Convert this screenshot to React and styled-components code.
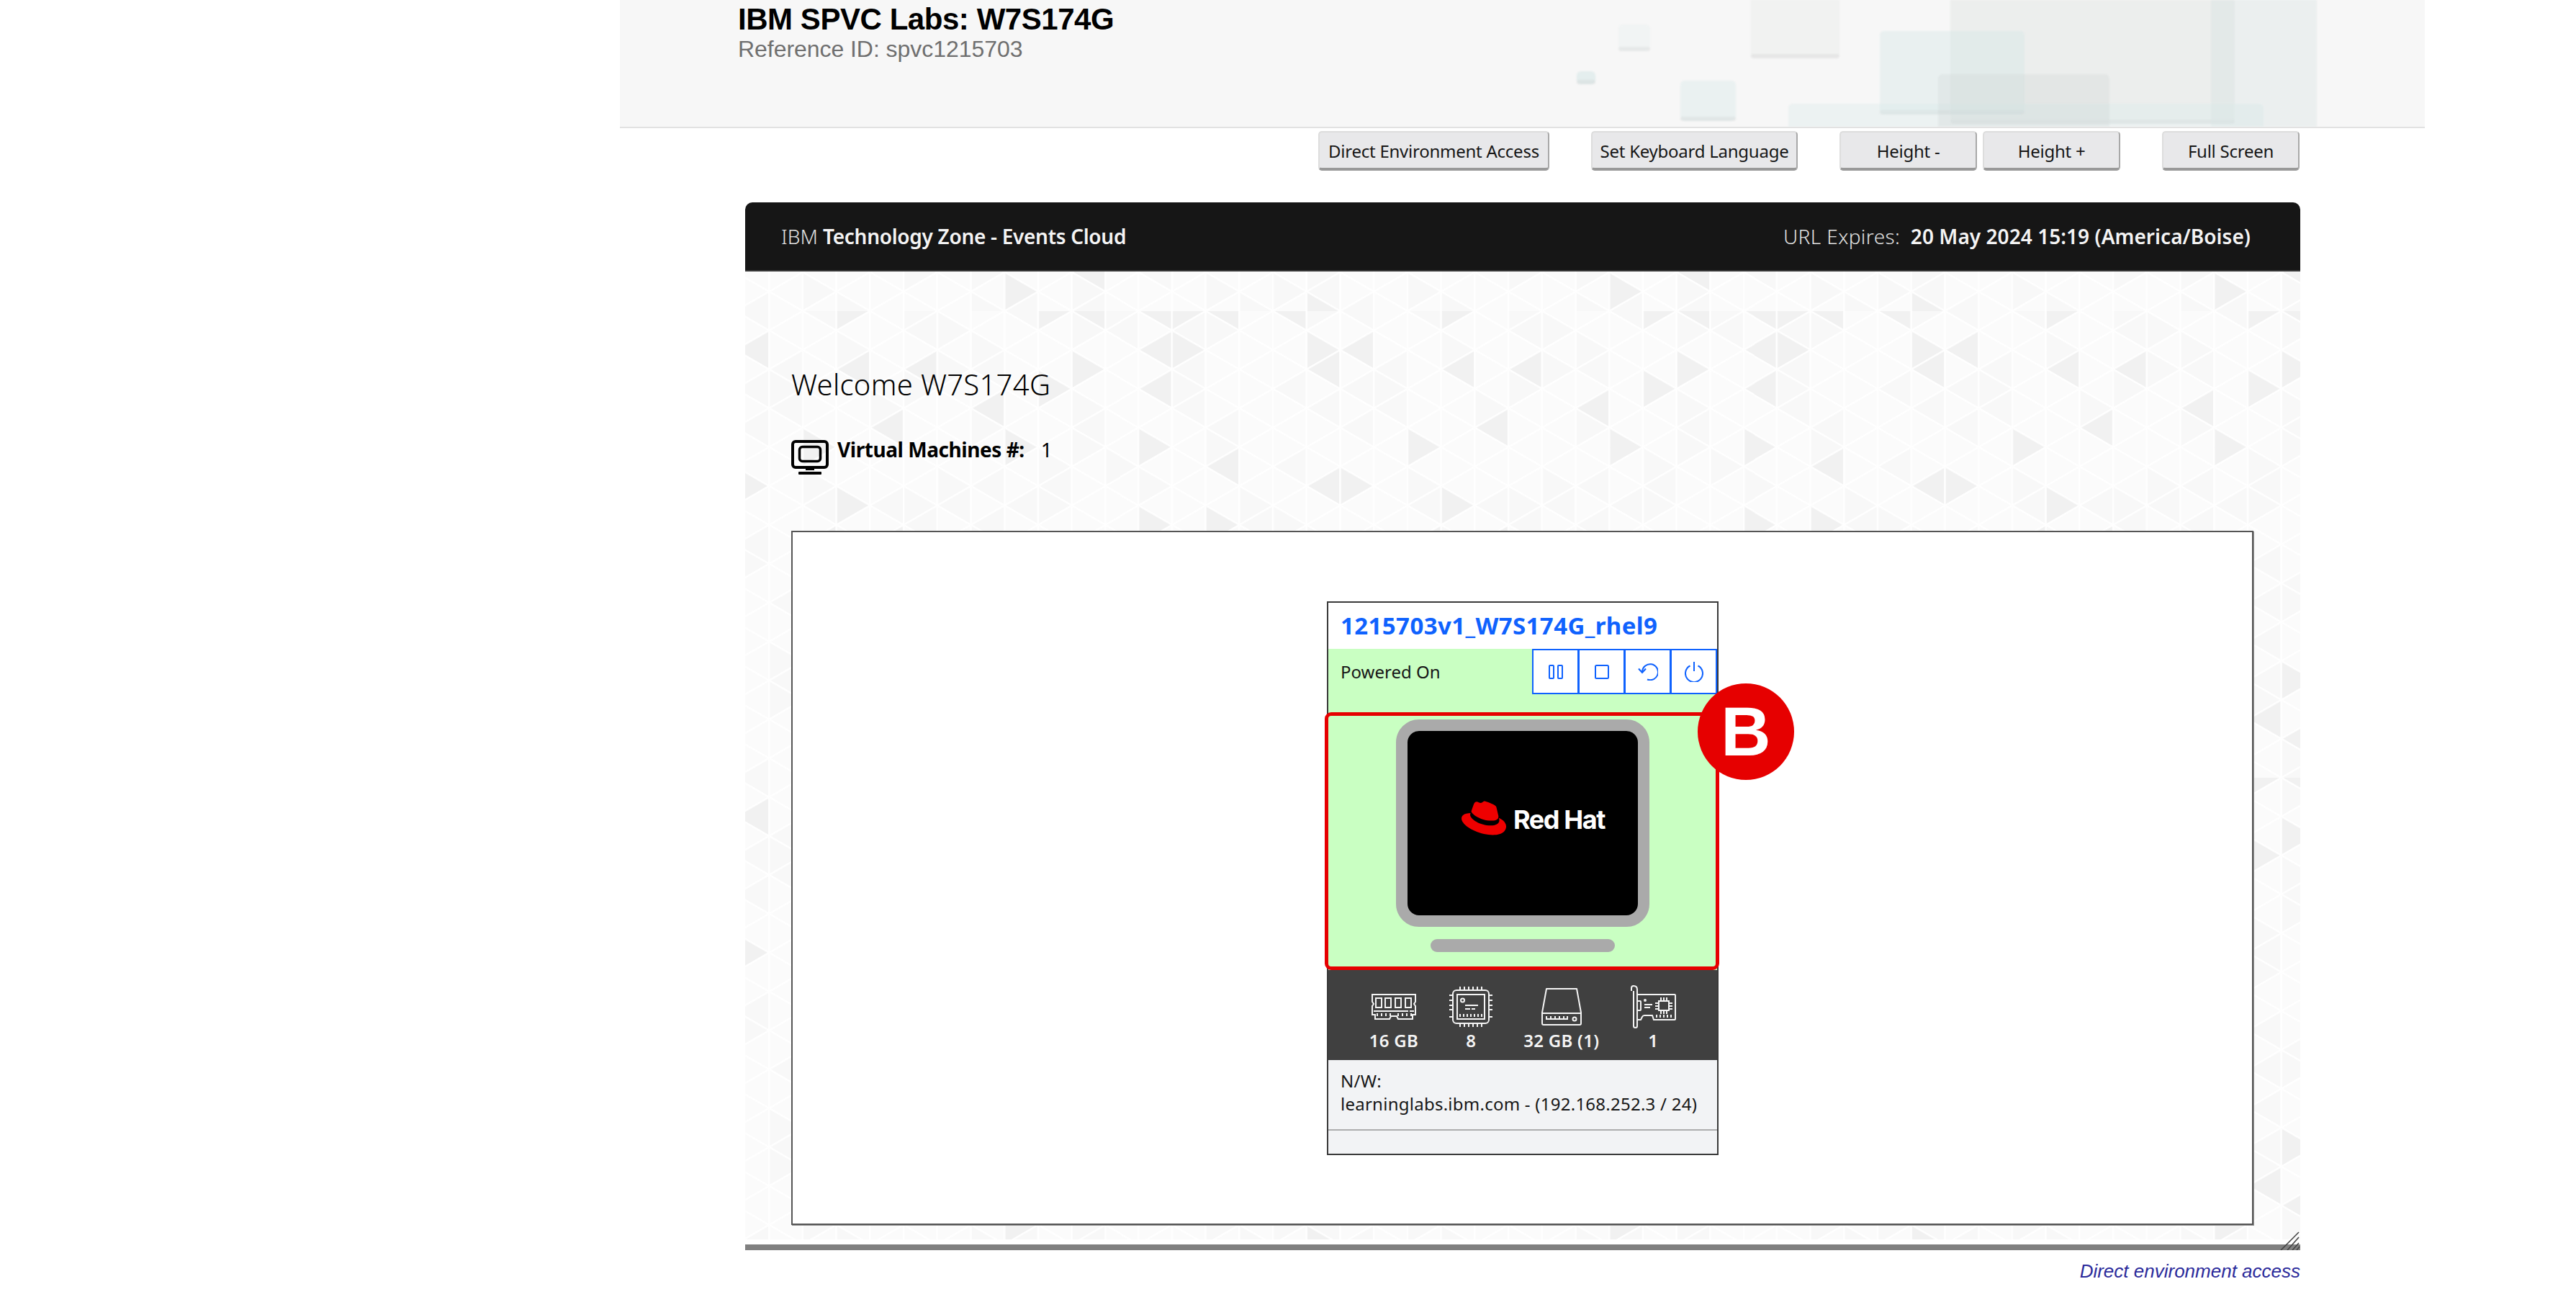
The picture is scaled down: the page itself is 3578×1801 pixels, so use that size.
import React from 'react';
import styled, { createGlobalStyle } from 'styled-components';
import { SiRedhat } from 'react-icons/si';

const PLEX = '"Noto Sans", "Open Sans", sans-serif';
const ARIAL = '"Liberation Sans", Arial, sans-serif';

// triangle lattice tile for the panel background
const buildTile = () => {
	const W = 46.67;
	const H = 54;
	const cols = 18;
	const rows = 12;
	let seed = 7;
	const next = () => {
		seed = (seed * 1103515245 + 12345) % 2147483648;
		return seed / 2147483648;
	};
	const shade = () => {
		const r = next();
		if (r < 0.1) return '#f1f1f1';
		if (r < 0.32) return '#f8f8f8';
		return '#fbfbfb';
	};
	const parts = [];
	for (let i = 0; i < cols; i++) {
		const off = i % 2 ? H / 2 : 0;
		const x0 = i * W;
		const x1 = (i + 1) * W;
		for (let j = -1; j < rows; j++) {
			const y = j * H + off;
			parts.push(
				`<path d="M${x0} ${y}V${y + H}L${x1} ${y + H / 2}Z" fill="${shade()}"/>`
			);
			parts.push(
				`<path d="M${x1} ${y + H / 2}V${y + (3 * H) / 2}L${x0} ${y + H}Z" fill="${shade()}"/>`
			);
		}
	}
	const svg = `<svg xmlns="http://www.w3.org/2000/svg" width="${cols * W}" height="${rows * H}"><g stroke="#fff" stroke-opacity="0.8" stroke-width="2.5">${parts.join('')}</g></svg>`;
	return `url("data:image/svg+xml,${encodeURIComponent(svg)}")`;
};

const TILE = buildTile();

const GlobalStyle = createGlobalStyle`
	html, body {
		margin: 0;
		padding: 0;
		background: #fff;
	}
	* {
		box-sizing: border-box;
	}
`;

const Page = styled.div`
	width: 3578px;
	height: 1801px;
	overflow: hidden;
	padding-left: 861px;
`;

const Header = styled.header`
	position: relative;
	width: 2507px;
	height: 178px;
	padding: 5px 0 0 164px;
	background: #f7f7f7;
	border-bottom: 2px solid #e2e2e2;
	overflow: hidden;
`;

const HeaderArt = styled.svg`
	position: absolute;
	left: 1319px;
	top: 0;
	filter: blur(0.8px);
`;

const Title = styled.h1`
	position: relative;
	margin: 0;
	font: bold 42px/44px ${ARIAL};
	letter-spacing: -0.45px;
	color: #000;
`;

const Subtitle = styled.div`
	position: relative;
	padding-top: 1px;
	font: 32px/36px ${ARIAL};
	letter-spacing: -0.05px;
	color: #6f6f6f;
`;

const Main = styled.div`
	width: 2160px;
	margin-left: 174px;
`;

const ButtonBar = styled.div`
	display: flex;
	justify-content: flex-end;
	gap: 58px;
	margin-top: 4px;
	padding-right: 1px;
	height: 55px;
`;

const ButtonGroup = styled.div`
	display: flex;
	gap: 8px;
`;

const ToolButton = styled.button`
	width: ${(p) => p.$width}px;
	height: 55px;
	padding: 2px 0 0;
	background: #e8e8ea;
	border: 2px solid #dddddd;
	border-right-color: #a8a8a8;
	border-bottom: 4px solid #999999;
	border-radius: 5px;
	font: 24px ${PLEX};
	letter-spacing: -0.25px;
	color: #161616;
`;

const Panel = styled.section`
	position: relative;
	margin-top: 44px;
`;

const PanelBar = styled.div`
	display: flex;
	justify-content: space-between;
	align-items: center;
	height: 96px;
	padding: 0 69px 0 50px;
	background: #161616;
	border-bottom: 2px solid #393939;
	border-radius: 10px 10px 0 0;
	font: 28px ${PLEX};
	color: #f4f4f4;
`;

const LightText = styled.span`
	font-weight: 300;
	letter-spacing: ${(p) => p.$tracking || 0}px;
	color: #e0e0e0;
`;

const MediumText = styled.span`
	font-weight: 600;
	letter-spacing: ${(p) => p.$tracking || 0}px;
`;

const PanelBody = styled.div`
	padding: 131px 65px 20px 64px;
	background-color: #fbfbfb;
	background-image: ${TILE};
	background-position: 80px 55px;
`;

const Welcome = styled.h2`
	margin: 0;
	font: 300 40px/52px ${PLEX};
	letter-spacing: 0.3px;
	color: #000;
`;

const VmCount = styled.div`
	display: flex;
	gap: 12px;
	height: 48px;
	margin-top: 51px;
	font: 28px/26px ${PLEX};
	color: #000;
`;

const VmCountLabel = styled.strong`
	font-weight: 700;
	letter-spacing: -0.45px;
	margin-right: 23px;
`;

const VmBox = styled.div`
	height: 964px;
	margin-top: 78px;
	padding-top: 96px;
	background: #fff;
	border: 2px solid #555;
	box-shadow: 1px 1px 0 #999;
	display: flex;
	justify-content: center;
`;

const Card = styled.article`
	width: 544px;
	height: 769px;
	margin-left: 1px;
	border: 2px solid #393939;
	display: flex;
	flex-direction: column;
	background: #f2f3f5;
`;

const CardTitle = styled.a`
	height: 64px;
	padding-left: 17px;
	background: #fff;
	font: 700 33px/64px ${PLEX};
	letter-spacing: 0.4px;
	color: #0f62fe;
`;

const StatusRow = styled.div`
	display: flex;
	justify-content: space-between;
	height: 88px;
	padding-left: 17px;
	background: #c9ffc2;
	font: 24px/63px ${PLEX};
	color: #161616;
`;

const ActionGroup = styled.div`
	display: flex;
	height: 63px;
`;

const ActionButton = styled.button`
	display: flex;
	align-items: center;
	justify-content: center;
	width: 65px;
	height: 63px;
	margin-left: -1px;
	padding: 0;
	background: #fff;
	border: 2px solid #0f62fe;
`;

const Machine = styled.div`
	position: relative;
	display: flex;
	flex-direction: column;
	align-items: center;
	height: 358px;
	padding: 10px 1px 0 0;
	background: #c9ffc2;
`;

const Monitor = styled.div`
	display: flex;
	align-items: center;
	justify-content: center;
	width: 352px;
	height: 288px;
	padding: 0 0 14px 30px;
	background: #000;
	border: 16px solid #aaaaaa;
	border-radius: 32px;
`;

const Stand = styled.div`
	width: 256px;
	height: 18px;
	margin-top: 17px;
	border-radius: 9px;
	background: #aaaaaa;
`;

const RedHatLogo = styled.div`
	display: flex;
	align-items: center;
	gap: 10px;
	color: #ee0000;
`;

const RedHatText = styled.span`
	font: 700 36px/1 Inter, sans-serif;
	letter-spacing: -1.4px;
	color: #fff;
	padding-top: 4px;
`;

const Highlight = styled.div`
	position: absolute;
	left: -5px;
	right: -3px;
	top: 0;
	bottom: 0;
	border: 5px solid #e60000;
	border-radius: 9px;
`;

const Badge = styled.div`
	position: absolute;
	left: 513px;
	top: -40px;
	width: 134px;
	height: 134px;
	border-radius: 50%;
	background: #e60000;
	color: #fff;
	font: bold 96px/134px ${ARIAL};
	text-align: center;
`;

const Specs = styled.div`
	display: flex;
	justify-content: center;
	gap: 43px;
	height: 125px;
	background: #404040;
`;

const Spec = styled.div`
	display: flex;
	flex-direction: column;
	align-items: center;
	color: #f4f4f4;
	font: 600 24px/30px ${PLEX};
	letter-spacing: 0.3px;
`;

const SpecIcon = styled.div`
	display: flex;
	align-items: center;
	height: 83px;
	padding-top: 18px;
`;

const Network = styled.div`
	height: 98px;
	padding: 13px 17px 0;
	border-bottom: 2px solid #adadad;
	font: 24px/32px ${PLEX};
	letter-spacing: 0.25px;
	color: #161616;
`;

const BottomBar = styled.div`
	height: 8px;
	margin-top: 7px;
	background: #808080;
`;

const Grip = styled.svg`
	position: absolute;
	right: 0;
	bottom: 0;
`;

const EnvLink = styled.a`
	display: block;
	margin-top: 13px;
	text-align: right;
	font: italic 26px/32px ${ARIAL};
	color: #2b2b9b;
`;

const block = (x, y, w, h, fill) => (
	<g key={`${x}-${y}`}>
		<rect x={x} y={y} width={w} height={h} rx="6" fill={fill} />
		<rect x={x} y={y + h - 6} width={w} height="6" rx="3" fill="rgba(190,190,190,0.2)" />
	</g>
);

const BackgroundArt = () => (
	<HeaderArt width="1060" height="176" viewBox="0 0 1060 176">
		{block(10, 99, 26, 18, 'rgba(215,232,232,0.6)')}
		{block(68, 34, 44, 37, 'rgba(238,242,242,0.7)')}
		{block(252, -10, 123, 91, 'rgba(232,234,232,0.45)')}
		{block(154, 112, 77, 56, 'rgba(222,236,236,0.5)')}
		{block(529, -10, 395, 182, 'rgba(226,230,228,0.5)')}
		{block(431, 43, 201, 116, 'rgba(212,230,230,0.4)')}
		{block(304, 144, 660, 50, 'rgba(215,232,232,0.35)')}
		{block(512, 103, 238, 90, 'rgba(205,212,212,0.3)')}
		<rect x="891" y="0" width="147" height="176" fill="rgba(210,224,224,0.32)" />
	</HeaderArt>
);

const VmIcon = () => (
	<svg width="52" height="48" viewBox="0 0 52 48" fill="none" stroke="#000">
		<rect x="2" y="2" width="48" height="36" rx="4" strokeWidth="4" />
		<rect x="11.5" y="9.5" width="29" height="20" rx="4" strokeWidth="3.5" />
		<rect x="20" y="40" width="12" height="2" fill="#000" stroke="none" />
		<rect x="10" y="44" width="32" height="4" rx="1" fill="#000" stroke="none" />
	</svg>
);

const blue = { fill: 'none', stroke: '#0f62fe', strokeWidth: 2 };

const PauseIcon = () => (
	<svg width="20" height="20" viewBox="0 0 20 20" {...blue}>
		<rect x="1" y="1" width="6" height="18" rx="1" />
		<rect x="13" y="1" width="6" height="18" rx="1" />
	</svg>
);

const StopIcon = () => (
	<svg width="20" height="20" viewBox="0 0 20 20" {...blue}>
		<rect x="1" y="1" width="18" height="18" rx="1.5" />
	</svg>
);

const RestartIcon = () => (
	<svg width="28" height="25" viewBox="0 0 28 25" {...blue}>
		<path d="M13 23.5A11 11 0 1 0 6 13" />
		<path d="M1 8.5L6 14L11 8.5" />
	</svg>
);

const PowerIcon = () => (
	<svg width="26" height="28" viewBox="0 0 26 28" {...blue}>
		<path d="M7.5 5.5A12 12 0 1 0 18.5 5.5" />
		<path d="M13 0V13" />
	</svg>
);

const white = { fill: 'none', stroke: '#f4f4f4', strokeWidth: 2 };

const MemoryIcon = () => (
	<svg width="64" height="36" viewBox="0 0 64 36" {...white}>
		<path d="M2 1H62V11L60 14L62 17V29H58V35H38L36 31H28L26 35H6V29H2V17L4 14L2 11Z" />
		<rect x="7" y="6" width="8" height="13" />
		<rect x="20" y="6" width="8" height="13" />
		<rect x="34" y="6" width="8" height="13" />
		<rect x="48" y="6" width="8" height="13" />
		<path d="M4 24H52M54 24H60" />
		<path d="M9 27V31M15 27V31M21 27V31M27 27V31M38 27V31M44 27V31M50 27V31M56 27V31" />
	</svg>
);

const CpuIcon = () => (
	<svg width="60" height="56" viewBox="0 0 60 56" {...white}>
		<rect x="5" y="5" width="50" height="46" rx="5" />
		<rect x="11" y="11" width="38" height="34" />
		<circle cx="18.5" cy="19" r="2.5" />
		<path d="M22 26H40M22 31H29M31 31H36" />
		<path d="M15 38V42M20 38V42M25 38V42M30 38V42M35 38V42M40 38V42M45 38V42" />
		<path d="M15 0V4M21 0V4M27 0V4M33 0V4M39 0V4M45 0V4M15 52V56M21 52V56M27 52V56M33 52V56M39 52V56M45 52V56" />
		<path d="M0 12H4M0 19H4M0 26H4M0 32H4M0 42H4M56 12H60M56 19H60M56 26H60M56 32H60M56 42H60" />
	</svg>
);

const DiskIcon = () => (
	<svg width="56" height="52" viewBox="0 0 56 52" {...white}>
		<path d="M7 1H49L55 34V49Q55 51 53 51H3Q1 51 1 49V34Z" strokeLinejoin="round" />
		<path d="M1 35H55" />
		<path d="M6 43H37M7 39V43M13 39V43M19 39V43M25 39V43M31 39V43M36 39V43" />
		<circle cx="46" cy="43" r="2.5" />
	</svg>
);

const NicIcon = () => (
	<svg width="64" height="60" viewBox="0 0 64 60" {...white}>
		<path d="M2 8V4Q2 1 5 1Q10 1 10 6V57Q10 59 7.5 59Q5 59 5 57V8" />
		<path d="M10 13H62Q63 13 63 14V47Q63 48 62 48H33L31 42H20Q18 42 17 44L15 48H10" />
		<path d="M10 22H14Q15 22 15 23V34Q15 35 14 35H10" />
		<circle cx="21" cy="21" r="1" />
		<path d="M20 27H31M20 31H28" />
		<rect x="40" y="22" width="14" height="13" />
		<path d="M43 17V21M47 17V21M51 17V21M43 36V40M47 36V40M51 36V40M35 25H39M35 29H39M35 33H39M55 25H59M55 29H59M55 33H59" />
		<path d="M37 41V45M42 41V45M47 41V45M52 41V45M57 41V45" />
	</svg>
);

const GripLines = () => (
	<Grip width="28" height="26" viewBox="0 0 28 26" stroke="#444" strokeWidth="1.6">
		<path d="M1 26L26 1" />
		<path d="M10 26L26 8" />
		<path d="M17 26L26 16" />
		<path d="M23 26L27 21" />
	</Grip>
);

const specs = [
	{ label: '16 GB', Icon: MemoryIcon },
	{ label: '8', Icon: CpuIcon },
	{ label: '32 GB (1)', Icon: DiskIcon },
	{ label: '1', Icon: NicIcon },
];

const App = () => (
	<Page>
		<GlobalStyle />
		<Header>
			<BackgroundArt />
			<Title>IBM SPVC Labs: W7S174G</Title>
			<Subtitle>Reference ID: spvc1215703</Subtitle>
		</Header>
		<Main>
			<ButtonBar>
				<ToolButton $width={321}>Direct Environment Access</ToolButton>
				<ToolButton $width={287}>Set Keyboard Language</ToolButton>
				<ButtonGroup>
					<ToolButton $width={191}>Height -</ToolButton>
					<ToolButton $width={191}>Height +</ToolButton>
				</ButtonGroup>
				<ToolButton $width={191}>Full Screen</ToolButton>
			</ButtonBar>
			<Panel>
				<PanelBar>
					<span>
						<LightText>IBM</LightText> <MediumText $tracking={-0.3}>Technology Zone - Events Cloud</MediumText>
					</span>
					<span>
						<LightText $tracking={0.4}>URL Expires:</LightText>&nbsp; <MediumText $tracking={0.05}>20 May 2024 15:19 (America/Boise)</MediumText>
					</span>
				</PanelBar>
				<PanelBody>
					<Welcome>Welcome W7S174G</Welcome>
					<VmCount>
						<VmIcon />
						<span>
							<VmCountLabel>Virtual Machines #:</VmCountLabel>1
						</span>
					</VmCount>
					<VmBox>
						<Card>
							<CardTitle>1215703v1_W7S174G_rhel9</CardTitle>
							<StatusRow>
								Powered On
								<ActionGroup>
									<ActionButton><PauseIcon /></ActionButton>
									<ActionButton><StopIcon /></ActionButton>
									<ActionButton><RestartIcon /></ActionButton>
									<ActionButton><PowerIcon /></ActionButton>
								</ActionGroup>
							</StatusRow>
							<Machine>
								<Monitor>
									<RedHatLogo>
										<SiRedhat size={62} />
										<RedHatText>Red Hat</RedHatText>
									</RedHatLogo>
								</Monitor>
								<Stand />
								<Highlight />
								<Badge>B</Badge>
							</Machine>
							<Specs>
								{specs.map(({ label, Icon }) => (
									<Spec key={label}>
										<SpecIcon><Icon /></SpecIcon>
										{label}
									</Spec>
								))}
							</Specs>
							<Network>
								N/W:
								<br />
								learninglabs.ibm.com - (192.168.252.3 / 24)
							</Network>
						</Card>
					</VmBox>
				</PanelBody>
				<BottomBar />
				<GripLines />
			</Panel>
			<EnvLink>Direct environment access</EnvLink>
		</Main>
	</Page>
);

export default App;
